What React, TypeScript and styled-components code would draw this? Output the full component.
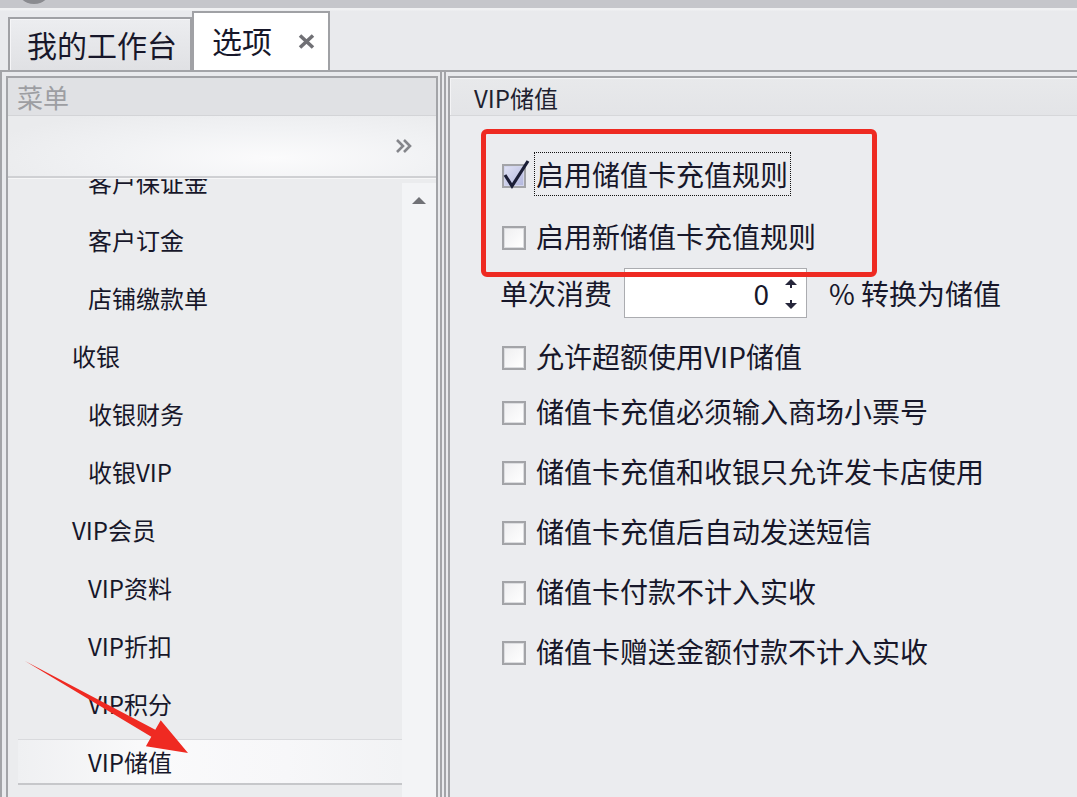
import React, { useId } from 'react';
import styled, { createGlobalStyle } from 'styled-components';

const GlobalStyle = createGlobalStyle`
  html, body { margin: 0; padding: 0; background: #e9eaed; }
  body { font-family: "Noto Sans CJK SC", "Noto Sans", sans-serif; color: #17172a; }
`;

const Screen = styled.div`
  position: relative;
  width: 1077px;
  height: 797px;
  overflow: hidden;
  background: #e9eaed;
  display: flex;
  flex-direction: column;
`;

const TopStrip = styled.div`
  height: 8px;
  flex: none;
  background: #c5c6cb;
  overflow: hidden;
  display: flex;
`;

const Orb = styled.div`
  width: 36px;
  height: 36px;
  border-radius: 50%;
  margin: -32px 0 0 16px;
  background: #8a8b90;
`;

const TabBar = styled.div`
  height: 62px;
  flex: none;
  box-sizing: border-box;
  display: flex;
  align-items: flex-end;
  padding-left: 8px;
  background: linear-gradient(#f0f1f3 0, #f0f1f3 2px, #e9eaed 3px);
`;

const Tab = styled.div<{ $active?: boolean }>`
  box-sizing: border-box;
  display: flex;
  align-items: center;
  gap: 26px;
  height: ${(p) => (p.$active ? 59 : 53)}px;
  padding: 0 ${(p) => (p.$active ? 13 : 13)}px ${(p) => (p.$active ? 3 : 2)}px
    ${(p) => (p.$active ? 18 : 17)}px;
  border: 2px solid #a0a1a5;
  border-bottom: none;
  background: ${(p) =>
    p.$active ? '#ffffff' : 'linear-gradient(#ecedf0, #e0e1e4)'};
  box-shadow: ${(p) => (p.$active ? 'none' : 'inset 1px 1px 0 #f6f6f8')};
  font-size: 30px;
  line-height: 1;
  color: #17172a;
  white-space: nowrap;
`;

const Main = styled.div`
  flex: 1;
  min-height: 0;
  display: flex;
  gap: 2px;
  border-top: 2px solid #a3a4a8;
`;

const Pane = styled.div<{ $width: number; $side: 'left' | 'right' }>`
  box-sizing: border-box;
  flex: none;
  width: ${(p) => p.$width}px;
  display: flex;
  border-left: 2px solid #a3a4a8;
  border-right: ${(p) => (p.$side === 'left' ? '2px solid #a3a4a8' : 'none')};
  padding: ${(p) => (p.$side === 'left' ? '4px 2px 0 4px' : '4px 0 0 2px')};
`;

const PaneInner = styled.div`
  flex: 1;
  min-width: 0;
  display: flex;
  flex-direction: column;
  border: 2px solid #a3a4a8;
  border-bottom: none;
`;

const MenuHeader = styled.div`
  height: 38px;
  flex: none;
  box-sizing: border-box;
  display: flex;
  align-items: center;
  padding-left: 9px;
  background: #e0e1e4;
  border-bottom: 1px solid #d3d4d7;
  font-size: 26px;
  line-height: 1;
  color: #9d9ea2;
`;

const Toolbar = styled.div`
  height: 62px;
  flex: none;
  box-sizing: border-box;
  display: flex;
  align-items: center;
  justify-content: flex-end;
  padding: 0 23px 0 0;
  background: radial-gradient(ellipse 70% 90% at 62% 70%, #fbfbfc 0%, #f1f2f4 55%, #eaebed 100%);
  border-bottom: 2px solid #cfd0d3;
  box-shadow: 0 1px 0 #f6f6f7;
`;

const ListArea = styled.div`
  flex: 1;
  min-height: 0;
  display: flex;
  margin-top: 1px;
  background: #ebecee;
`;

const MenuList = styled.div`
  flex: 1;
  min-width: 0;
  overflow: hidden;
`;

const MenuScroll = styled.div`
  margin-top: -25px;
  display: flex;
  flex-direction: column;
`;

const MenuRow = styled.div`
  height: 58px;
  flex: none;
  box-sizing: border-box;
  padding: 5px 0 7px 10px;
  display: flex;
`;

const MenuLabel = styled.div<{ $level: number; $selected?: boolean }>`
  flex: 1;
  box-sizing: border-box;
  display: flex;
  align-items: center;
  padding-left: ${(p) => (p.$level === 1 ? 54 : 70)}px;
  font-size: 24px;
  line-height: 1;
  color: #17172a;
  white-space: nowrap;
  border-top: 1px solid ${(p) => (p.$selected ? '#d9dadd' : 'transparent')};
  border-bottom: 2px solid ${(p) => (p.$selected ? '#c6c7ca' : 'transparent')};
  background: ${(p) =>
    p.$selected
      ? 'linear-gradient(90deg, #eff0f2 0%, #fafafb 35%, #f7f7f9 70%, #f2f3f5 100%)'
      : 'transparent'};
`;

const ScrollTrack = styled.div`
  width: 34px;
  flex: none;
  margin-top: 4px;
  background: #f3f4f6;
  display: flex;
  justify-content: center;
  align-items: flex-start;
  padding-top: 14px;
  box-sizing: border-box;
`;

const SectionHeader = styled.div`
  height: 38px;
  flex: none;
  box-sizing: border-box;
  display: flex;
  align-items: center;
  padding: 3px 0 0 24px;
  background: linear-gradient(#e8e9eb, #e3e4e7);
  border-bottom: 1px solid #d6d7da;
  box-shadow: inset 1px 1px 0 #f4f4f6;
  font-size: 24px;
  line-height: 1;
  color: #1f1f30;
`;

const Content = styled.div`
  flex: 1;
  background: #ebecef;
  padding: 36px 0 0 51px;
  display: flex;
  flex-direction: column;
`;

const OptionRow = styled.div<{ $mt: number }>`
  display: flex;
  align-items: center;
  gap: 5px;
  height: 44px;
  margin-top: ${(p) => p.$mt}px;
  font-size: 28px;
  line-height: 1;
  white-space: nowrap;
`;

const OptionLabel = styled.span<{ $focused?: boolean }>`
  box-sizing: border-box;
  height: 44px;
  display: flex;
  align-items: center;
  padding: 0 2px 0 1px;
  border: 1px dotted ${(p) => (p.$focused ? '#111' : 'transparent')};
  color: #17172a;
`;

const SpinRow = styled.div<{ $mt: number }>`
  display: flex;
  align-items: center;
  height: 50px;
  margin-top: ${(p) => p.$mt}px;
  margin-left: -1px;
  font-size: 28px;
  line-height: 1;
  white-space: nowrap;
  color: #17172a;
`;

const SpinBox = styled.div`
  box-sizing: border-box;
  width: 183px;
  height: 50px;
  margin: 0 22px 0 12px;
  display: flex;
  align-items: center;
  background: #ffffff;
  border: 1px solid #abacb0;
`;

const SpinValue = styled.span`
  flex: 1;
  text-align: right;
  font-size: 28px;
  color: #17172a;
`;

const Annotation = styled.div`
  position: absolute;
  left: 481px;
  top: 129px;
  width: 396px;
  height: 148px;
  box-sizing: border-box;
  border: 5px solid #ee2a22;
  border-radius: 6px;
  pointer-events: none;
`;

const ArrowLayer = styled.svg`
  position: absolute;
  left: 0;
  top: 0;
  pointer-events: none;
`;

const CloseIcon = () => (
  <svg width="17" height="15" viewBox="0 0 17 15" style={{ marginTop: 2 }}>
    <path d="M2 1.5 L15 13.5 M15 1.5 L2 13.5" stroke="#707075" strokeWidth="3.6" fill="none" />
  </svg>
);

const ChevronsIcon = () => (
  <svg width="18" height="16" viewBox="0 0 18 16">
    <path d="M2 2 L8 8 L2 14 M9 2 L15 8 L9 14" stroke="#85868b" strokeWidth="2.6" fill="none" />
  </svg>
);

const ScrollUpIcon = () => (
  <svg width="14" height="7" viewBox="0 0 14 7">
    <path d="M0 7 L7 0 L14 7 Z" fill="#707176" />
  </svg>
);

const SpinArrows = () => (
  <svg width="16" height="48" viewBox="0 0 16 48" style={{ margin: '0 7px 0 14px' }}>
    <path d="M2 16 L8 10 L14 16 Z" fill="#26263a" />
    <rect x="7" y="16" width="2" height="3" fill="#26263a" />
    <rect x="7" y="31" width="2" height="3" fill="#26263a" />
    <path d="M2 34 L8 40 L14 34 Z" fill="#26263a" />
  </svg>
);

const Checkbox = ({ checked }: { checked?: boolean }) => {
  const id = useId().replace(/:/g, '');
  return (
    <svg width="28" height="30" viewBox="0 0 28 30" style={{ overflow: 'visible', flex: 'none' }}>
      <defs>
        <linearGradient id={`g${id}`} x1="0" y1="0" x2="1" y2="1">
          <stop offset="0" stopColor={checked ? '#dfe1f4' : '#efeff1'} />
          <stop offset="1" stopColor={checked ? '#b4b8de' : '#ffffff'} />
        </linearGradient>
      </defs>
      <rect x="1" y="5" width="24" height="24" fill="#a3a4a8" />
      <rect x="3" y="7" width="20" height="20" fill={checked ? '#d2d5ec' : '#dcdde0'} />
      <rect x="4" y="8" width="18" height="18" fill={`url(#g${id})`} />
      {checked && (
        <path d="M4 16 L11 27 L27 2" stroke="#1b1e36" strokeWidth="3.2" fill="none" strokeLinejoin="miter" />
      )}
    </svg>
  );
};

const menuItems: { label: string; level: number; selected?: boolean }[] = [
  { label: '客户保证金', level: 2 },
  { label: '客户订金', level: 2 },
  { label: '店铺缴款单', level: 2 },
  { label: '收银', level: 1 },
  { label: '收银财务', level: 2 },
  { label: '收银VIP', level: 2 },
  { label: 'VIP会员', level: 1 },
  { label: 'VIP资料', level: 2 },
  { label: 'VIP折扣', level: 2 },
  { label: 'VIP积分', level: 2 },
  { label: 'VIP储值', level: 2, selected: true },
];

const options: { label: string; mt: number }[] = [
  { label: '允许超额使用VIP储值', mt: 16 },
  { label: '储值卡充值必须输入商场小票号', mt: 11 },
  { label: '储值卡充值和收银只允许发卡店使用', mt: 16 },
  { label: '储值卡充值后自动发送短信', mt: 16 },
  { label: '储值卡付款不计入实收', mt: 16 },
  { label: '储值卡赠送金额付款不计入实收', mt: 16 },
];

export default function App() {
  return (
    <>
      <GlobalStyle />
      <Screen>
        <TopStrip>
          <Orb />
        </TopStrip>
        <TabBar>
          <Tab>我的工作台</Tab>
          <Tab $active>
            选项
            <CloseIcon />
          </Tab>
        </TabBar>
        <Main>
          <Pane $width={442} $side="left">
            <PaneInner>
              <MenuHeader>菜单</MenuHeader>
              <Toolbar>
                <ChevronsIcon />
              </Toolbar>
              <ListArea>
                <MenuList>
                  <MenuScroll>
                    {menuItems.map((m) => (
                      <MenuRow key={m.label}>
                        <MenuLabel $level={m.level} $selected={m.selected}>
                          {m.label}
                        </MenuLabel>
                      </MenuRow>
                    ))}
                  </MenuScroll>
                </MenuList>
                <ScrollTrack>
                  <ScrollUpIcon />
                </ScrollTrack>
              </ListArea>
            </PaneInner>
          </Pane>
          <Pane $width={700} $side="right">
            <PaneInner>
              <SectionHeader>VIP储值</SectionHeader>
              <Content>
                <OptionRow $mt={0}>
                  <Checkbox checked />
                  <OptionLabel $focused>启用储值卡充值规则</OptionLabel>
                </OptionRow>
                <OptionRow $mt={18}>
                  <Checkbox />
                  <OptionLabel>启用新储值卡充值规则</OptionLabel>
                </OptionRow>
                <SpinRow $mt={10}>
                  单次消费
                  <SpinBox>
                    <SpinValue>0</SpinValue>
                    <SpinArrows />
                  </SpinBox>
                  % 转换为储值
                </SpinRow>
                {options.map((o) => (
                  <OptionRow key={o.label} $mt={o.mt}>
                    <Checkbox />
                    <OptionLabel>{o.label}</OptionLabel>
                  </OptionRow>
                ))}
              </Content>
            </PaneInner>
          </Pane>
        </Main>
        <Annotation />
        <ArrowLayer width="1077" height="797" viewBox="0 0 1077 797">
          <polygon
            points="25,661 151.3,736.7 145.9,746.2 188,753 160.7,720.2 155.3,729.7"
            fill="#ef2a22"
          />
        </ArrowLayer>
      </Screen>
    </>
  );
}
